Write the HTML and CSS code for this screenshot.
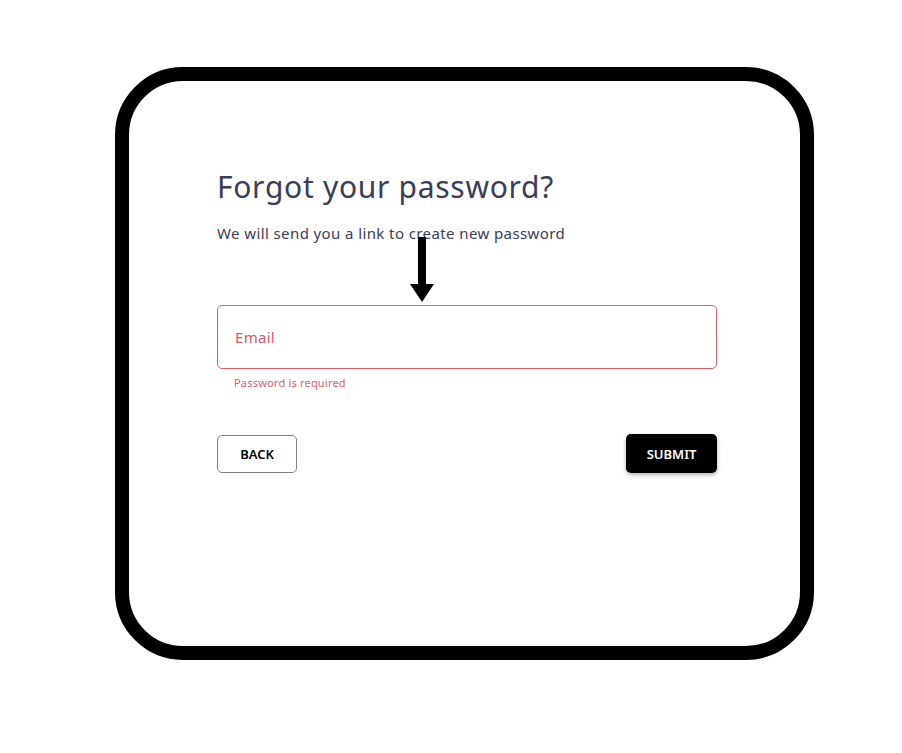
FILE: index.html
```html
<!DOCTYPE html>
<html lang="en">
<head>
  <meta charset="UTF-8" />
  <meta name="viewport" content="width=device-width, initial-scale=1.0"/>
  <title>Forgot password</title>
  <link rel="stylesheet" href="styles.css">
</head>
<body>
  <div class="frame">
    <div class="card">
      <h1>Forgot your password?</h1>
      <p class="subtitle">We will send you a link to create new password</p>

      <!-- pointer arrow drawn over the form -->
      <svg class="arrow" width="26" height="66" viewBox="0 0 26 66">
        <rect x="9" y="0" width="8" height="48" fill="#000"/>
        <polygon points="1,47 25,47 13,65" fill="#000"/>
      </svg>

      <div class="field">
        <input type="text" class="input error" placeholder="Email" />
        <div class="helper">Password is required</div>
      </div>

      <div class="actions">
        <button class="btn outline">BACK</button>
        <button class="btn solid">SUBMIT</button>
      </div>
    </div>
  </div>
</body>
</html>
```

FILE: styles.css
```css
body {
  margin: 0;
  background: #fff;
  font-family: "Noto Sans", "DejaVu Sans", sans-serif;
}
.frame {
  padding: 67px 0 0 115px;
}
.card {
  position: relative;
  box-sizing: border-box;
  width: 699px;
  height: 593px;
  border: 14px solid #000;
  border-radius: 68px;
  padding: 86px 0 0 88px;
}
h1 {
  margin: 0;
  font-size: 30px;
  font-weight: 400;
  letter-spacing: 0.7px;
  color: #3a3d57;
  line-height: 40px;
}
.subtitle {
  margin: 16px 0 0;
  font-size: 15px;
  letter-spacing: 0.4px;
  color: #3a3d57;
  line-height: 20px;
}
.arrow {
  position: absolute;
  left: 280px;
  top: 156px;
}
.field {
  margin-top: 62px;
  width: 500px;
}
.input {
  box-sizing: border-box;
  width: 500px;
  height: 64px;
  padding: 0 17px;
  border: 1px solid #d4606e;
  border-radius: 5px;
  font-family: inherit;
  font-size: 15px;
  letter-spacing: 0.3px;
  outline: none;
}
.input::placeholder {
  color: #cf5a6a;
}
.helper {
  margin: 6px 0 0 17px;
  font-size: 11px;
  letter-spacing: 0.2px;
  color: #d4606e;
  line-height: 16px;
}
.actions {
  margin-top: 43px;
  width: 500px;
  display: flex;
  justify-content: space-between;
  align-items: center;
}
.btn {
  font-family: inherit;
  font-size: 13px;
  font-weight: 600;
  border-radius: 5px;
  cursor: pointer;
}
.outline {
  width: 80px;
  height: 38px;
  background: #fff;
  color: #000;
  border: 1px solid #808080;
}
.solid {
  width: 91px;
  height: 39px;
  background: #000;
  color: #fff;
  border: none;
  box-shadow: 0 2px 4px rgba(0, 0, 0, 0.3);
}
```
